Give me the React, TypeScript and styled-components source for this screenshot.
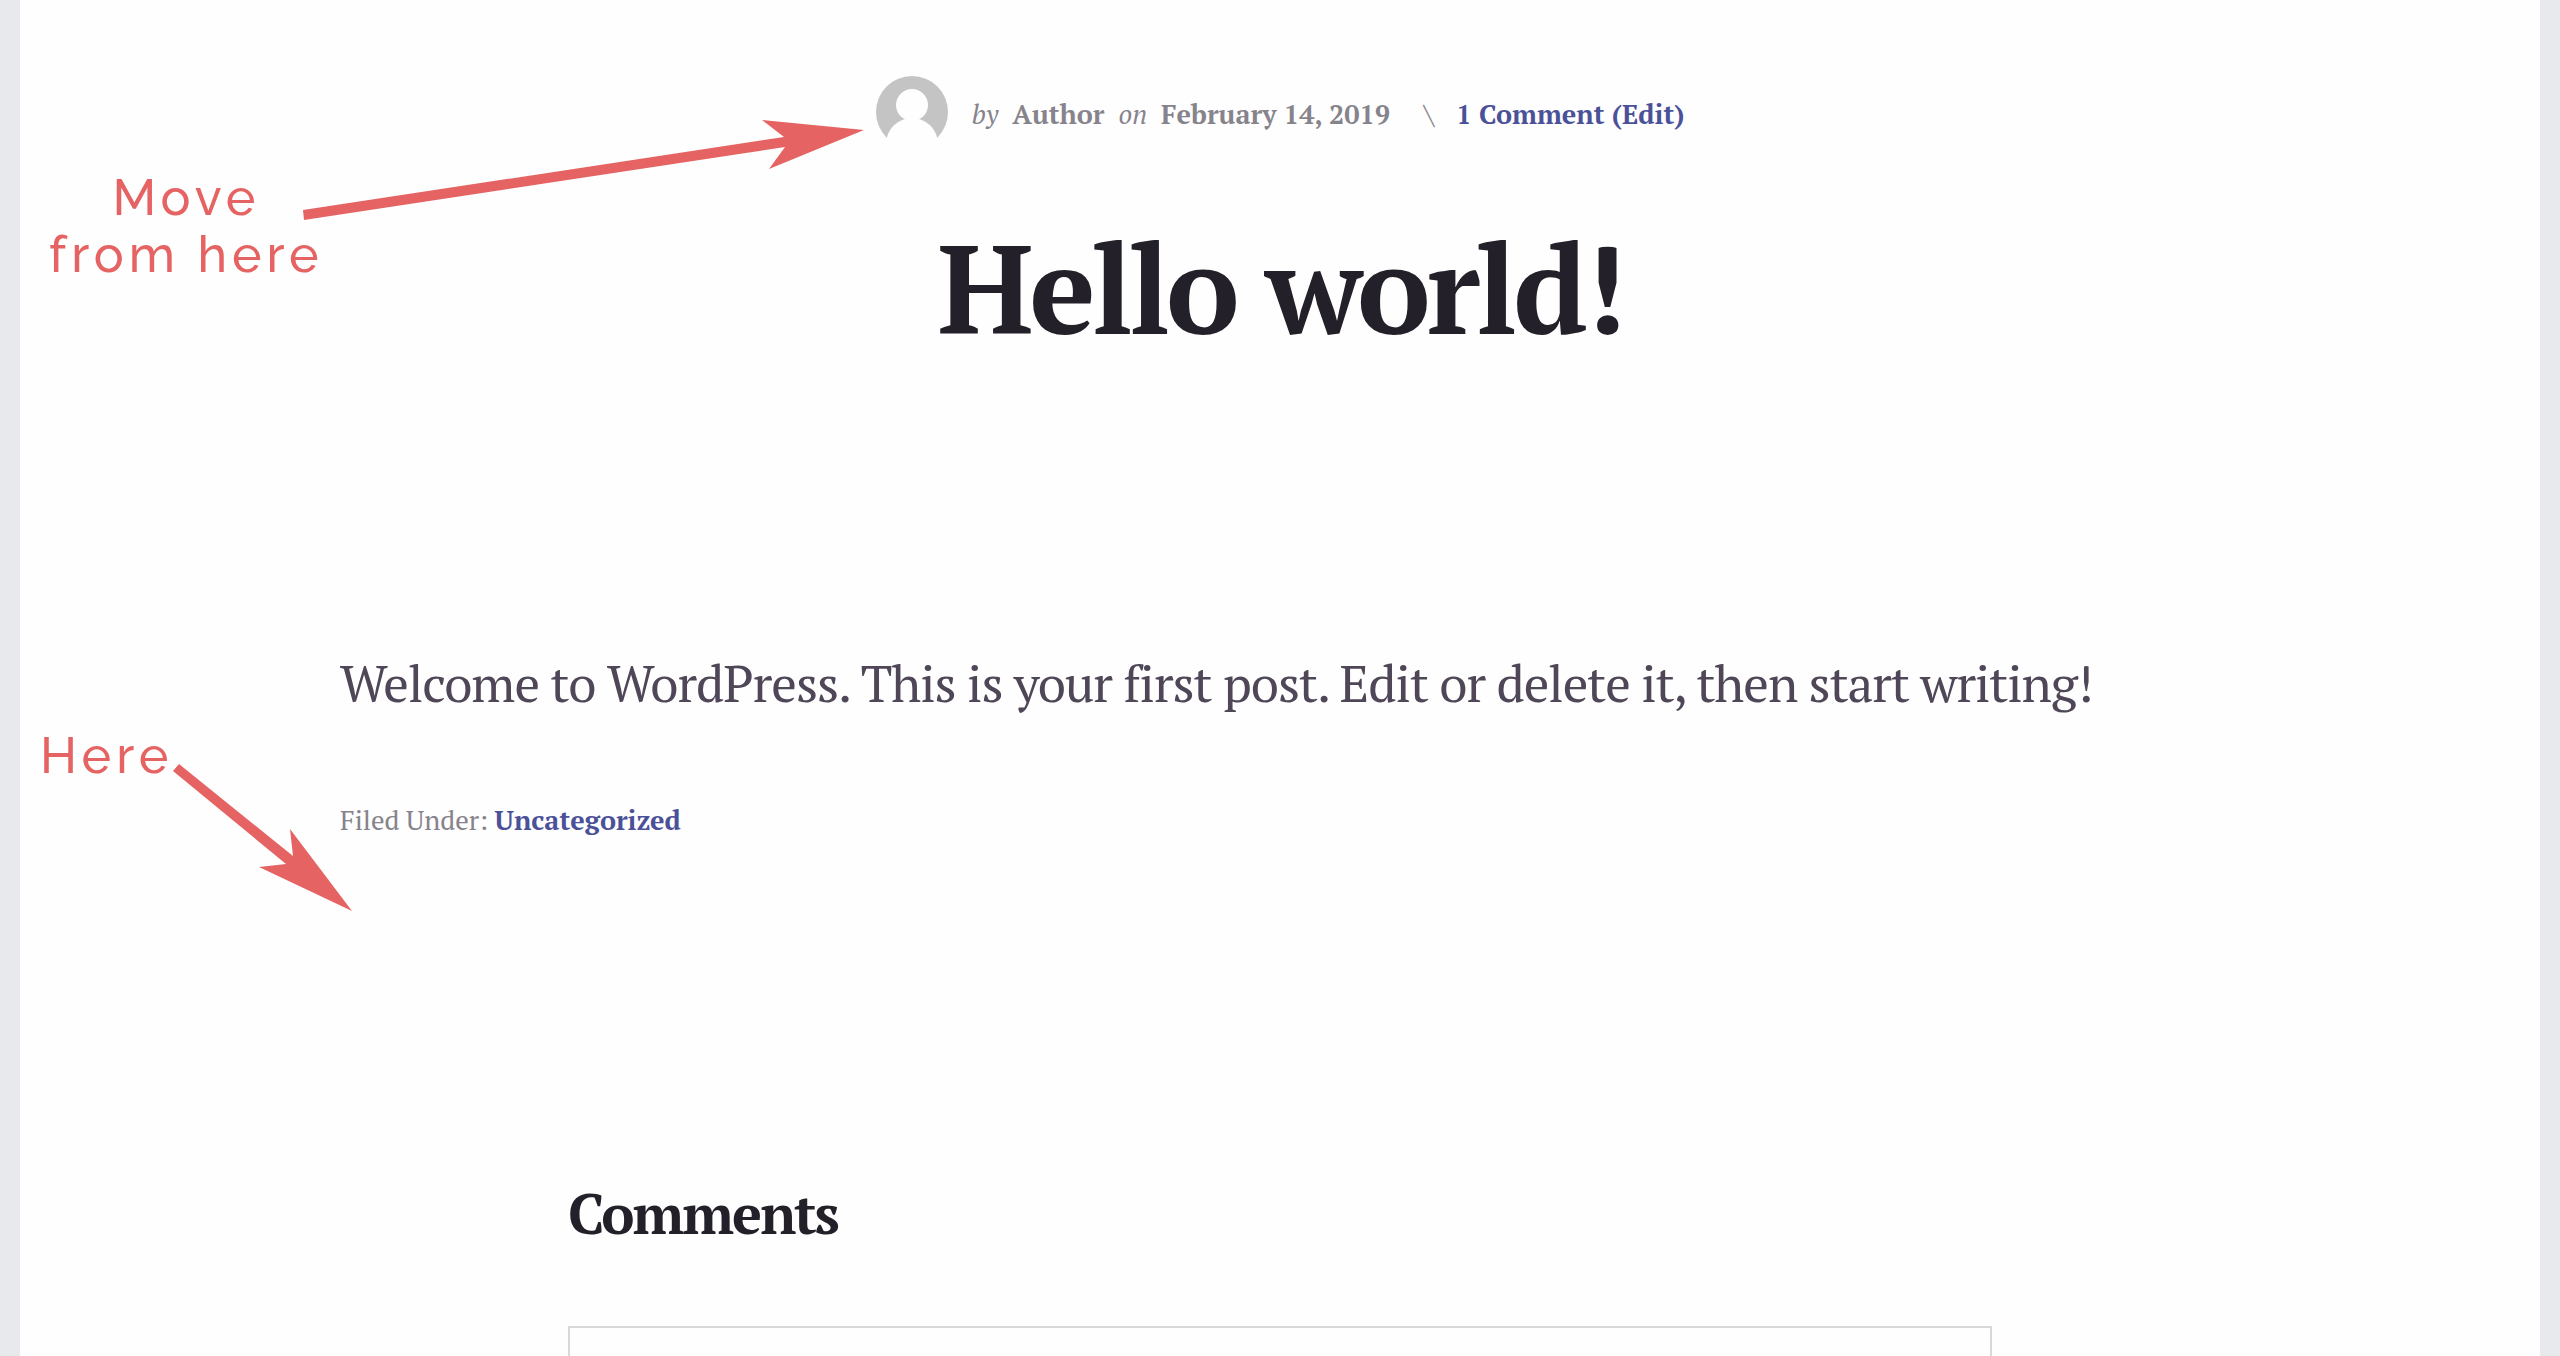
import React from "react";
import styled, { createGlobalStyle } from "styled-components";

const serif = '"PT Serif", "Liberation Serif", serif';
const ink = "#232029";
const muted = "#87838c";
const link = "#4b5199";
const coral = "#e56363";

const GlobalStyle = createGlobalStyle`
  *, *::before, *::after { box-sizing: border-box; }
  body { margin: 0; background: #e8e9ed; }
`;

const Site = styled.div`
  position: relative;
  display: flex;
  flex-direction: column;
  min-height: 100vh;
  margin: 0 20px;
  background: #fefefe;
  font-family: ${serif};
  color: ${ink};
`;

const EntryHeader = styled.header`
  display: flex;
  flex-direction: column;
  align-items: center;
  gap: 64px;
  padding: 76px 40px 0;
`;

const EntryMeta = styled.div`
  display: flex;
  align-items: center;
  gap: 24px;
`;

const Avatar = styled.svg`
  width: 72px;
  height: 72px;
  flex: none;
`;

const MetaList = styled.p`
  display: flex;
  align-items: baseline;
  gap: 14px;
  margin: 0;
  padding-top: 4px;
  font-size: 27px;
  line-height: 40px;
  color: ${muted};
`;

const Divider = styled.span`
  padding: 0 8px 0 20px;
`;

const StrongLink = styled.a`
  color: ${link};
  font-weight: 700;
  text-decoration: none;
`;

const Title = styled.h1`
  margin: 0;
  font-size: 124px;
  line-height: 150px;
  font-weight: 700;
  letter-spacing: -4px;
  text-align: center;
`;

const Column = styled.div<{ $width: number }>`
  width: 100%;
  max-width: ${(p) => p.$width}px;
  margin: 0 auto;
`;

const Body = styled.p`
  margin: 281px 0 0;
  font-size: 51px;
  line-height: 80px;
  letter-spacing: -1px;
  color: #4f4757;
`;

const Filed = styled.p`
  margin: 77px 0 0;
  font-size: 27px;
  line-height: 40px;
  color: ${muted};
`;

const Comments = styled(Column).attrs({ as: "section" })`
  display: flex;
  flex: 1;
  flex-direction: column;
  gap: 73px;
  padding-top: 333px;
`;

const CommentsTitle = styled.h2`
  margin: 0;
  font-size: 56px;
  line-height: 80px;
  font-weight: 700;
  letter-spacing: -2px;
`;

const CommentBox = styled.article`
  flex: 1;
  min-height: 30px;
  border: 2px solid #d8d8d8;
  border-bottom: 0;
`;

const Note = styled.p<{ $left: number; $top: number }>`
  position: absolute;
  left: ${(p) => p.$left}px;
  top: ${(p) => p.$top}px;
  margin: 0;
  font-family: Raleway, Lato, sans-serif;
  font-size: 50px;
  line-height: 57px;
  font-weight: 500;
  letter-spacing: 5px;
  text-align: center;
  color: ${coral};
`;

const Arrow = styled.svg<{ $left: number; $top: number }>`
  position: absolute;
  left: ${(p) => p.$left}px;
  top: ${(p) => p.$top}px;
  fill: ${coral};
`;

export default function App() {
  return (
    <>
      <GlobalStyle />
      <Site>
        <main>
          <EntryHeader>
            <EntryMeta>
              <Avatar viewBox="0 0 72 72" aria-hidden="true">
                <circle cx="36" cy="36" r="36" fill="#c4c4c4" />
                <circle cx="36" cy="29" r="16" fill="#fefefe" />
                <circle cx="36" cy="68" r="26" fill="#fefefe" />
              </Avatar>
              <MetaList>
                <em>by</em>
                <strong>Author</strong>
                <em>on</em>
                <strong>February 14, 2019</strong>
                <Divider>\</Divider>
                <StrongLink href="#comments">1 Comment (Edit)</StrongLink>
              </MetaList>
            </EntryMeta>
            <Title>Hello world!</Title>
          </EntryHeader>
          <Column $width={1880}>
            <Body>
              Welcome to WordPress. This is your first post. Edit or delete it, then start writing!
            </Body>
            <Filed>
              Filed Under: <StrongLink href="#uncategorized">Uncategorized</StrongLink>
            </Filed>
          </Column>
        </main>
        <Comments $width={1424} id="comments">
          <CommentsTitle>Comments</CommentsTitle>
          <CommentBox />
        </Comments>

        <Note $left={29} $top={169}>
          Move
          <br />
          from here
        </Note>
        <Arrow $left={282} $top={118} width="570" height="106" viewBox="302 118 570 106" aria-hidden="true">
          <path d="M303 210 784 137 762 120 864 130 769 169 785 147 304 220Z" />
        </Arrow>
        <Note $left={20} $top={727}>Here</Note>
        <Arrow $left={150} $top={760} width="190" height="154" viewBox="170 760 190 154" aria-hidden="true">
          <path d="M179 764 293 856 290 829 352 911 259 867 286 864 173 771Z" />
        </Arrow>
      </Site>
    </>
  );
}
